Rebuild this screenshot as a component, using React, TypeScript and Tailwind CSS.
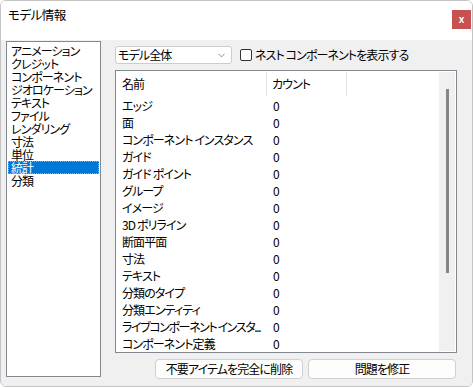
import { ChevronDown } from "lucide-react";

const categories = [
  "アニメーション",
  "クレジット",
  "コンポーネント",
  "ジオロケーション",
  "テキスト",
  "ファイル",
  "レンダリング",
  "寸法",
  "単位",
  "統計",
  "分類",
];

const rows = [
  "エッジ",
  "面",
  "コンポーネント インスタンス",
  "ガイド",
  "ガイド ポイント",
  "グループ",
  "イメージ",
  "3D ポリライン",
  "断面平面",
  "寸法",
  "テキスト",
  "分類のタイプ",
  "分類エンティティ",
  "ライブコンポーネント インスタ...",
  "コンポーネント定義",
];

const font = "font-['Noto_Sans_CJK_JP','Noto_Sans',sans-serif] [font-feature-settings:'palt']";

export default function App() {
  return (
    <div className={`w-[473px] h-[388px] bg-white text-[12px] text-black tracking-[-0.9px] ${font}`}>
      <div className="w-[473px] h-[387px] border border-[#c4c4c4] rounded-[6px] overflow-hidden flex flex-col">
        {/* title bar */}
        <div className="h-[39px] bg-white flex items-center justify-between pl-[7px] pr-[1px]">
          <span className="text-[12.5px] leading-none mt-[-10px] tracking-[-0.5px]">モデル情報</span>
          <div className="w-[19px] h-[19px] bg-[#c75050] text-white text-[10px] font-bold leading-none flex items-center justify-center mt-[-2px] tracking-normal font-['Liberation_Sans',sans-serif]">
            x
          </div>
        </div>

        {/* body */}
        <div className="flex-1 bg-[#f0f0f0] flex pl-[5px] pt-[1px]">
          <div className="w-[95px] h-[336px] bg-white border border-[#828790] pt-[2px] pl-[1px] pr-[1px]">
            {categories.map((c) => (
              <div
                key={c}
                className={`h-[13px] leading-[13px] pl-[3px] whitespace-nowrap ${
                  c === "統計" ? "bg-[#0078d7] text-white outline-1 outline-dotted outline-[#f0a030] -outline-offset-1" : ""
                }`}
              >
                {c}
              </div>
            ))}
          </div>

          <div className="ml-[14px] w-[342px] pt-[5px] flex flex-col">
            {/* combo + checkbox */}
            <div className="h-[18px] flex items-center">
              <div className="w-[117px] h-[18px] bg-white border border-[#cccccc] rounded-[3px] flex items-center justify-between pl-[2px] pr-[4px]">
                <span className="leading-none">モデル全体</span>
                <ChevronDown size={11} strokeWidth={1.5} className="text-[#606060]" />
              </div>
              <div className="ml-[8px] w-[12px] h-[12px] border border-[#333333] rounded-[2px] bg-white" />
              <span className="ml-[3px] leading-none">ネスト コンポーネントを表示する</span>
            </div>

            {/* table */}
            <div className="mt-[6px] h-[283px] bg-white border border-[#828790] flex">
              <div className="flex-1">
                <div className="h-[26px] flex items-center">
                  <div className="w-[150px] pl-[6px]">名前</div>
                  <div className="w-px h-[24px] bg-[#e5e5e5] self-start mt-[1px]" />
                  <div className="w-[79px] pl-[5px]">カウント</div>
                  <div className="w-px h-[24px] bg-[#e5e5e5] self-start mt-[1px]" />
                </div>
                {rows.map((r) => (
                  <div key={r} className="h-[17px] flex items-center">
                    <div
                      className={`w-[150px] pl-[6px] whitespace-nowrap overflow-hidden ${
                        r.endsWith("...") ? "tracking-[-1.4px]" : ""
                      }`}
                    >
                      {r}
                    </div>
                    <div className="w-px" />
                    <div className="pl-[6px]">0</div>
                  </div>
                ))}
              </div>
              <div className="w-[16px] mr-[1px] my-[1px] bg-[#f0f0f0] pt-[17px] pl-[7px]">
                <div className="w-[3px] h-[184px] bg-[#858585]" />
              </div>
            </div>

            {/* buttons */}
            <div className="mt-[6px] flex justify-end gap-[5px] pr-[1px]">
              <div className="w-[148px] h-[20px] bg-[#fdfdfd] border border-[#d0d0d0] rounded-[4px] flex items-center justify-center leading-none">
                不要アイテムを完全に削除
              </div>
              <div className="w-[148px] h-[20px] bg-[#fdfdfd] border border-[#d0d0d0] rounded-[4px] flex items-center justify-center leading-none">
                問題を修正
              </div>
            </div>
          </div>
        </div>
      </div>
    </div>
  );
}
